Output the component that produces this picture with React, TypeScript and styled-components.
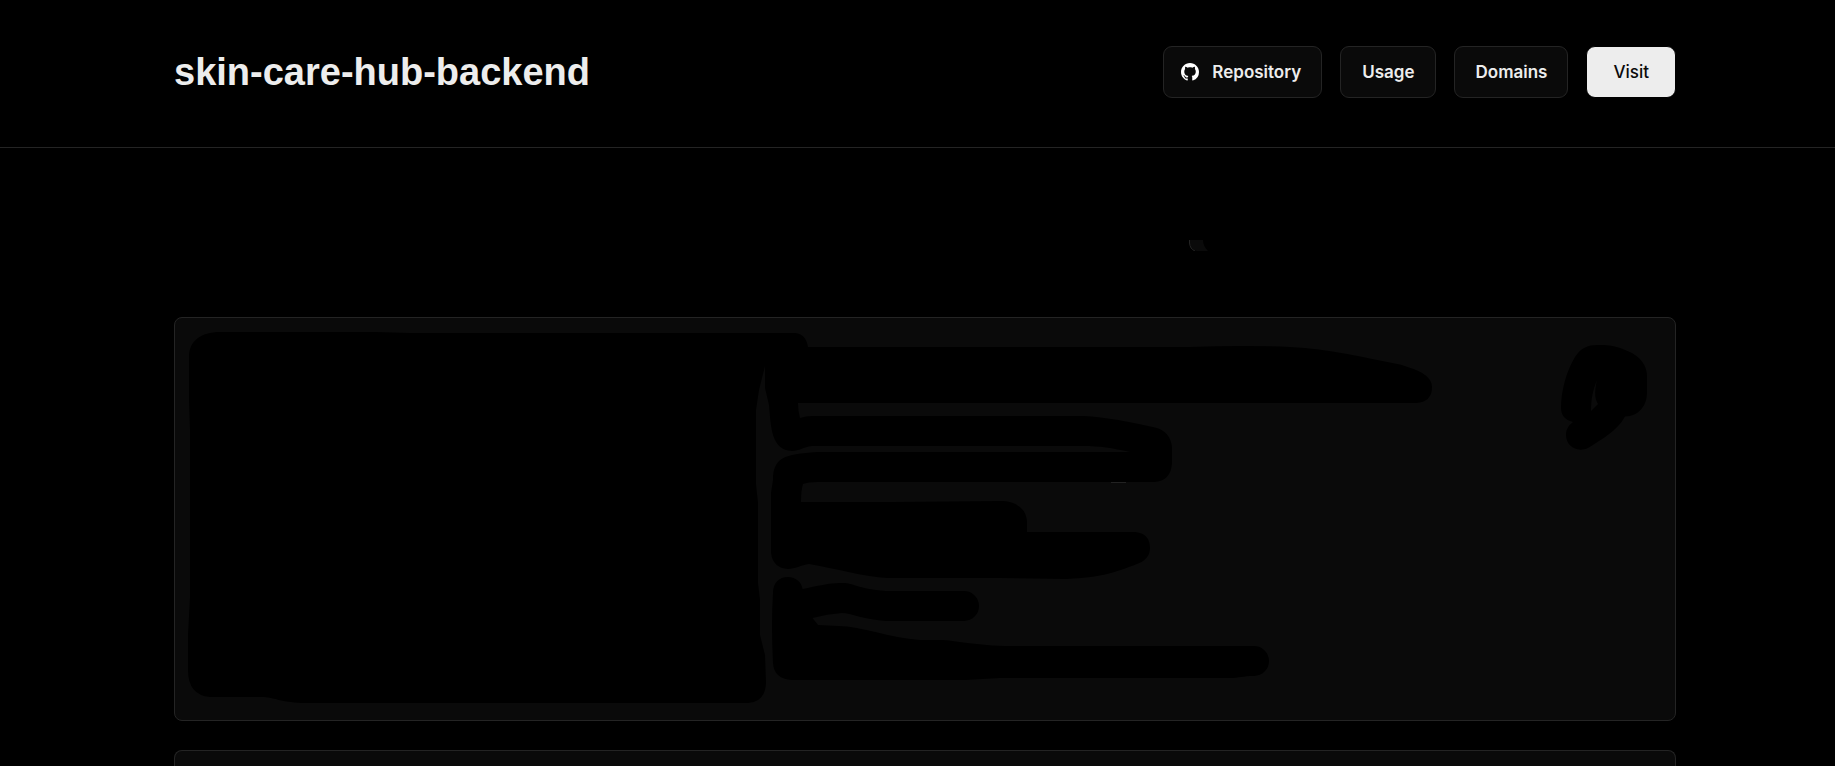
import React from "react";
import styled, { createGlobalStyle } from "styled-components";

const GlobalStyle = createGlobalStyle`
  *, *::before, *::after { box-sizing: border-box; }
  body {
    margin: 0;
    background: #000;
    color: #ededed;
    font-family: Inter, "Liberation Sans", sans-serif;
  }
`;

const Page = styled.div`
  display: flex;
  flex-direction: column;
  min-height: 100vh;
`;

const Header = styled.header`
  display: flex;
  align-items: center;
  justify-content: space-between;
  padding: 46px 159px 49px 174px;
  border-bottom: 1px solid #242424;
`;

const Title = styled.h1`
  margin: 0;
  font-family: "Liberation Sans", Arial, sans-serif;
  font-size: 38px;
  line-height: 52px;
  font-weight: 700;
  white-space: nowrap;
`;

const Actions = styled.nav`
  display: flex;
  gap: 18px;
`;

const Button = styled.button<{ $primary?: boolean; $withIcon?: boolean }>`
  display: flex;
  align-items: center;
  justify-content: center;
  gap: 13px;
  height: 52px;
  padding: 0 ${(p) => (p.$primary ? 26 : 20)}px;
  padding-left: ${(p) => (p.$withIcon ? 17 : p.$primary ? 26 : 21)}px;
  border: 1px solid ${(p) => (p.$primary ? "#000" : "#242424")};
  border-radius: 9px;
  background: ${(p) => (p.$primary ? "#ededed" : "#0a0a0a")};
  color: ${(p) => (p.$primary ? "#0a0a0a" : "#ededed")};
  font-family: inherit;
  font-size: 17px;
  line-height: 24px;
  font-weight: ${(p) => (p.$primary ? 500 : 600)};
  white-space: nowrap;
  cursor: pointer;
`;

const GithubMark = styled.svg`
  display: block;
  width: 18px;
  height: 18px;
  fill: #fff;
`;

const Main = styled.main`
  display: flex;
  flex-direction: column;
  flex: 1;
  padding: 92px 159px 0 174px;
`;

const Drawing = styled.svg`
  display: block;
  width: 100%;
`;

const Card = styled.section`
  margin-top: 66px;
  border: 1px solid #242424;
  border-radius: 8px;
  background: #0a0a0a;
  overflow: hidden;
`;

const NextCard = styled.section`
  flex: 1;
  min-height: 16px;
  margin-top: 29px;
  border: 1px solid #242424;
  border-bottom: 0;
  border-radius: 8px 8px 0 0;
  background: #0a0a0a;
`;

export default function App() {
  return (
    <Page>
      <GlobalStyle />
      <Header>
        <Title>skin-care-hub-backend</Title>
        <Actions>
          <Button type="button" $withIcon>
            <GithubMark viewBox="0 0 16 16" aria-hidden="true">
              <path d="M8 0C3.58 0 0 3.58 0 8c0 3.54 2.29 6.53 5.47 7.59.4.07.55-.17.55-.38 0-.19-.01-.82-.01-1.49-2.01.37-2.53-.49-2.69-.94-.09-.23-.48-.94-.82-1.13-.28-.15-.68-.52-.01-.53.63-.01 1.08.58 1.23.82.72 1.21 1.87.87 2.33.66.07-.52.28-.87.51-1.07-1.78-.2-3.64-.89-3.64-3.95 0-.87.31-1.59.82-2.15-.08-.2-.36-1.02.08-2.12 0 0 .67-.21 2.2.82.64-.18 1.32-.27 2-.27s1.36.09 2 .27c1.53-1.04 2.2-.82 2.2-.82.44 1.1.16 1.92.08 2.12.51.56.82 1.27.82 2.15 0 3.07-1.87 3.75-3.65 3.95.29.25.54.73.54 1.48 0 1.07-.01 1.93-.01 2.2 0 .21.15.46.55.38A8.01 8.01 0 0 0 16 8c0-4.42-3.58-8-8-8Z" />
            </GithubMark>
            Repository
          </Button>
          <Button type="button">Usage</Button>
          <Button type="button">Domains</Button>
          <Button type="button" $primary>Visit</Button>
        </Actions>
      </Header>
      <Main>
        <Drawing viewBox="174 240 1502 11" aria-hidden="true">
          <path d="M1189 240H1203Q1203 246 1208 251H1197Q1189 250 1189 240Z" fill="#0a0a0a" />
          <path d="M1189.5 240V243Q1190 249 1195 251" fill="none" stroke="#242424" />
        </Drawing>
        <Card>
          <Drawing viewBox="175 318 1500 402" aria-hidden="true">
            {/* preview block and the upper lines of detail */}
            <path d="M189 357C189 341 201 332 220 332H375L410 333H795Q806 334 808 347H1190Q1245 345 1290 347C1330 349 1362 357 1400 364.500C1422 371 1432 377 1432 387Q1432 402 1416 403H798Q798 411 800 418Q806 416 812 416H1083C1106 417 1130 422 1155 427.500Q1170 431 1172 447V463Q1171 481 1154 482H818Q808 482 803 484Q801 490 801 502H893L1003 501Q1025 503 1027 521V532H1133C1147 532 1150 541 1150 548C1150 556 1145 561 1138 563.500C1112 574 1100 577 1067 579L1000 578H887C865 577 838 569 809 564C801 565 795 569 788 569Q773 568 771 553V493L773 480C773 458 784 454 817 452H1130C1112 448 1100 446 1083 446H812C803 447 799 451 792 451C771 450 771 427 769 405L765 388V366L759 390L756 410V484L758 503V583L760 600V635L765 655L766 683Q765 702 748 703H302C280 702 273 697 262 697H210Q188 695 188 670V635L190 597V430L189 400Z" />
            {/* lower lines of detail */}
            <path d="M773 593C773 583 779 577 788 577C796 577 802 583 802.500 589C817 586 830 583 840 583C854 582 853 588 886 591H964A15 15 0 0 1 964 621H886C866 620 850 613 842 613Q827 614 812.500 618L818 625L838 626C862 626 889 638 920 640H940C955 640 975 646 1011 646H1254A15 15 0 0 1 1254 676C1242 676 1240 678 1229 678H1000L965 680H792Q774 679 773 663Q771 625 773 593Z" />
            {/* mark in the upper right corner, with its narrow opening */}
            <path
              fillRule="evenodd"
              d="M1598 345C1612 345 1617 346 1632 353C1644 360 1647 369 1647 376V392C1647 406 1639 416 1625 416.500C1617 431 1602 439 1588 448C1577 453 1566 446 1566 435C1566 429 1569 425 1573 422C1565 420 1561 415 1561 408C1561 390 1567 370 1575 357C1581 348 1587 345 1598 345ZM1597 380C1593 390 1591 398 1591 411L1598 404C1595 399 1594 393 1597 380Z"
            />
            <path d="M1111 482.500H1126" stroke="#222" />
          </Drawing>
        </Card>
        <NextCard />
      </Main>
    </Page>
  );
}
